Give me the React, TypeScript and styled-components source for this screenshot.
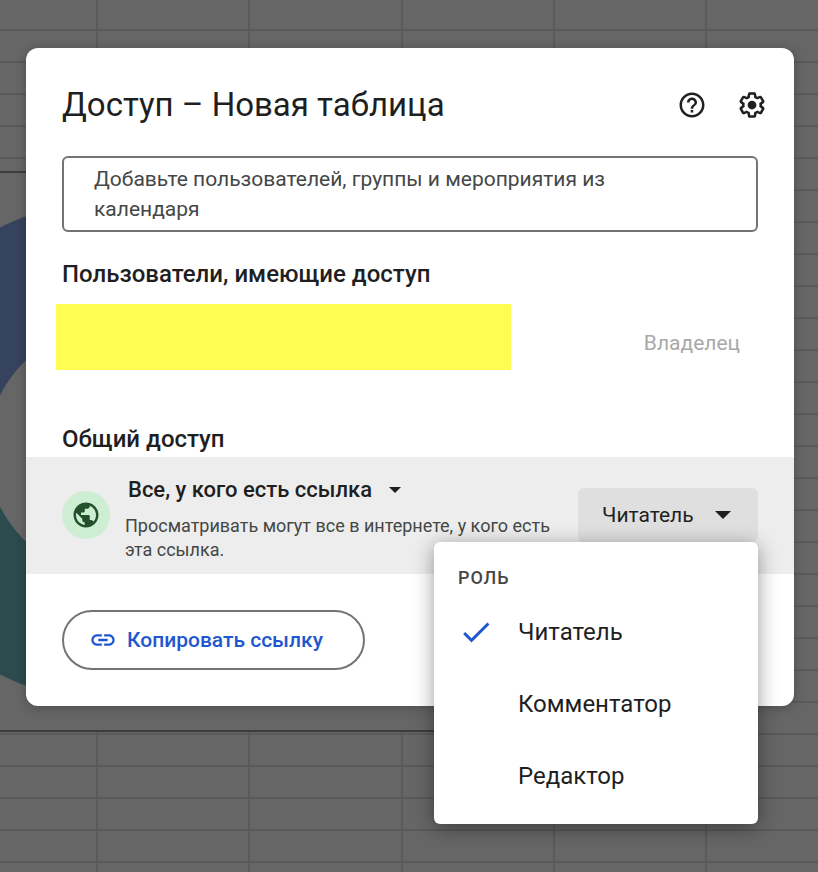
import React, { useState } from "react";
import styled, { createGlobalStyle } from "styled-components";

const GlobalStyle = createGlobalStyle`
  *, *::before, *::after { box-sizing: border-box; }
  body { margin: 0; background: #666; }
  body, button, select, textarea { font-family: Roboto, "Noto Sans", sans-serif; }
`;

const Page = styled.div`
  position: relative;
  min-height: 100vh;
  padding: 48px 24px 48px 26px;
  overflow: hidden;
`;

const SheetBackdrop = styled.svg`
  position: absolute;
  inset: 0;
  width: 100%;
  height: 100%;
`;

const Dialog = styled.section`
  position: relative;
  display: flex;
  flex-direction: column;
  padding-bottom: 36px;
  border-radius: 12px;
  background: #fff;
  color: #1f1f1f;
  box-shadow: 0 2px 12px rgba(0, 0, 0, 0.25);
`;

const Header = styled.header`
  display: flex;
  align-items: center;
  justify-content: space-between;
  padding: 34px 24px 28px 36px;
`;

const Title = styled.h1`
  margin: 0;
  font-size: 33px;
  line-height: 46px;
  font-weight: 400;
`;

const Actions = styled.div`
  display: flex;
  gap: 24px;
`;

const IconButton = styled.button`
  display: grid;
  place-items: center;
  width: 36px;
  height: 36px;
  padding: 0;
  border: 0;
  border-radius: 50%;
  background: none;
  color: #1f1f1f;
  cursor: pointer;
`;

const PeopleField = styled.textarea`
  display: block;
  margin: 0 36px;
  height: 76px;
  padding: 6px 96px 6px 30px;
  border: 2px solid #747474;
  border-radius: 6px;
  background: #fff;
  color: #1f1f1f;
  font-size: 21px;
  line-height: 30px;
  resize: none;
  overflow: hidden;
  &::placeholder { color: #444746; opacity: 1; }
`;

const SectionTitle = styled.h2`
  margin: 0;
  padding: 0 36px;
  font-size: 24px;
  line-height: 32px;
  font-weight: 500;
`;

const PeopleSection = styled.section`
  padding-top: 26px;
`;

const PersonRow = styled.div`
  display: flex;
  align-items: center;
  justify-content: space-between;
  padding: 14px 54px 53px 30px;
`;

const PersonIdentity = styled.div`
  flex: 0 1 455px;
  height: 66px;
  background: #fffc52;
`;

const OwnerLabel = styled.span`
  padding-top: 12px;
  color: #a9a9a9;
  font-size: 21px;
  line-height: 30px;
`;

const AccessRow = styled.div`
  display: flex;
  align-items: flex-start;
  gap: 15px;
  margin-top: 2px;
  padding: 16px 36px 12px;
  background: #ededed;
`;

const GlobeBadge = styled.span`
  display: grid;
  place-items: center;
  flex: none;
  width: 48px;
  height: 48px;
  margin-top: 18px;
  border-radius: 50%;
  background: #ceeed3;
  color: #24512b;
`;

const AccessText = styled.div`
  flex: 1;
  min-width: 0;
`;

const ScopePicker = styled.label`
  display: flex;
  align-items: center;
  gap: 16px;
  height: 33px;
  padding-left: 3px;
`;

const ScopeSelect = styled.select`
  appearance: none;
  padding: 0;
  border: 0;
  background: none;
  color: #1f1f1f;
  font-size: 22px;
  line-height: 32px;
  font-weight: 500;
`;

const AccessHint = styled.p`
  margin: 8px 0 0;
  color: #444746;
  font-size: 18px;
  line-height: 24px;
`;

const RoleAnchor = styled.div`
  position: relative;
  flex: none;
  margin-top: 15px;
`;

const RoleButton = styled.button`
  display: flex;
  align-items: center;
  justify-content: space-between;
  width: 180px;
  height: 54px;
  padding: 0 27px 0 24px;
  border: 0;
  border-radius: 6px;
  background: #dfdfdf;
  color: #1f1f1f;
  font-size: 21px;
  cursor: pointer;
`;

const RoleMenu = styled.div`
  position: absolute;
  top: 100%;
  right: 0;
  width: 324px;
  padding: 24px 0 12px;
  border-radius: 6px;
  background: #fff;
  box-shadow: 0 4px 20px rgba(0, 0, 0, 0.4);
`;

const MenuHeading = styled.div`
  padding: 0 24px 6px;
  color: #444746;
  font-size: 18px;
  line-height: 24px;
  font-weight: 500;
  letter-spacing: 1px;
`;

const MenuItem = styled.button`
  display: grid;
  grid-template-columns: 36px 1fr;
  column-gap: 24px;
  align-items: center;
  width: 100%;
  height: 72px;
  padding: 0 24px;
  border: 0;
  background: none;
  color: #1f1f1f;
  font-size: 24px;
  text-align: left;
  cursor: pointer;
`;

const CheckSlot = styled.span`
  display: grid;
  place-items: center;
  color: #1f57d0;
`;

const Footer = styled.footer`
  display: flex;
  padding: 36px 36px 0;
`;

const CopyButton = styled.button`
  display: flex;
  align-items: center;
  gap: 10px;
  height: 60px;
  padding: 0 40px 0 25px;
  border: 2px solid #747474;
  border-radius: 30px;
  background: #fff;
  color: #1f57d0;
  font-size: 21px;
  font-weight: 500;
  cursor: pointer;
`;

function Icon({ size, d }: { size: number; d: string }) {
  return (
    <svg width={size} height={size} viewBox="0 0 24 24" fill="currentColor" aria-hidden="true">
      <path d={d} />
    </svg>
  );
}

const helpPath =
  "M11 18h2v-2h-2v2zm1-16C6.480 2 2 6.480 2 12s4.480 10 10 10 10-4.480 10-10S17.520 2 12 2zm0 18c-4.410 0-8-3.590-8-8s3.590-8 8-8 8 3.590 8 8-3.590 8-8 8zm0-14c-2.210 0-4 1.790-4 4h2c0-1.100.9-2 2-2s2 .9 2 2c0 2-3 1.750-3 5h2c0-2.250 3-2.500 3-5 0-2.210-1.790-4-4-4z";
const gearPath =
  "M13.850 22.250h-3.700c-.74 0-1.360-.54-1.450-1.270l-.27-1.890c-.27-.14-.53-.29-.79-.46l-1.800.72c-.7.26-1.470-.03-1.810-.65L2.200 15.530c-.35-.66-.2-1.440.36-1.880l1.530-1.190c-.01-.15-.02-.3-.02-.46 0-.15.01-.31.02-.46l-1.520-1.190c-.59-.45-.74-1.260-.37-1.880l1.850-3.190c.34-.62 1.110-.9 1.790-.63l1.810.73c.26-.17.52-.32.78-.46l.27-1.910c.09-.7.710-1.250 1.440-1.250h3.700c.74 0 1.360.54 1.450 1.270l.27 1.890c.27.14.53.29.79.46l1.800-.72c.71-.26 1.480.03 1.820.65l1.840 3.180c.36.66.2 1.440-.36 1.880l-1.520 1.190c.01.15.02.3.02.46s-.01.31-.02.46l1.520 1.190c.56.45.72 1.230.37 1.860l-1.860 3.220c-.34.62-1.110.9-1.800.63l-1.800-.72c-.26.17-.52.32-.78.46l-.27 1.910c-.1.68-.72 1.220-1.460 1.220zm-3.230-2h2.760l.37-2.550.53-.22c.44-.18.88-.44 1.340-.78l.45-.34 2.380.96 1.380-2.400-2.030-1.580.07-.56c.03-.26.06-.51.06-.78s-.03-.53-.06-.78l-.07-.56 2.030-1.580-1.390-2.400-2.390.96-.45-.35c-.42-.32-.87-.58-1.330-.77l-.52-.22-.37-2.550h-2.760l-.37 2.550-.53.21c-.44.19-.88.44-1.340.79l-.45.33-2.380-.95-1.390 2.390 2.030 1.580-.07.56a7 7 0 0 0-.06.79c0 .26.02.53.06.78l.07.56-2.030 1.580 1.380 2.400 2.390-.96.45.35c.43.33.86.58 1.330.77l.53.22.38 2.550zM12 8.500a3.500 3.500 0 1 0 0 7 3.500 3.500 0 0 0 0-7z";
const globePath =
  "M12 2C6.480 2 2 6.480 2 12s4.480 10 10 10 10-4.480 10-10S17.520 2 12 2zm-1 17.930c-3.950-.49-7-3.850-7-7.930 0-.62.08-1.210.21-1.790L9 15v1c0 1.100.9 2 2 2v1.930zm6.900-2.540c-.26-.81-1-1.390-1.900-1.390h-1v-3c0-.55-.45-1-1-1H8v-2h2c.55 0 1-.45 1-1V7h2c1.100 0 2-.9 2-2v-.41c2.930 1.190 5 4.060 5 7.410 0 2.080-.8 3.970-2.100 5.390z";
const linkPath =
  "M3.900 12c0-1.710 1.390-3.100 3.100-3.100h4V7H7c-2.760 0-5 2.240-5 5s2.240 5 5 5h4v-1.900H7c-1.710 0-3.100-1.390-3.100-3.100zM8 13h8v-2H8v2zm9-6h-4v1.900h4c1.710 0 3.100 1.390 3.100 3.100s-1.390 3.100-3.100 3.100h-4V17h4c2.760 0 5-2.240 5-5s-2.240-5-5-5z";
const checkPath = "M9 16.170L4.830 12l-1.420 1.410L9 19 21 7l-1.410-1.410z";

function Caret({ width }: { width: number }) {
  return (
    <svg width={width} height={width / 2} viewBox="0 0 12 6" fill="#1f1f1f" aria-hidden="true">
      <path d="M0 0h12L6 6z" />
    </svg>
  );
}

const columnLines = [97, 249, 402, 554, 706];

function Sheet() {
  return (
    <SheetBackdrop aria-hidden="true">
      <defs>
        <pattern id="rows" y="29" width="32" height="32" patternUnits="userSpaceOnUse">
          <rect width="32" height="2" fill="#5a5a5a" />
        </pattern>
      </defs>
      <rect width="100%" height="100%" fill="#666" />
      <rect width="100%" height="100%" fill="url(#rows)" />
      {columnLines.map((x) => (
        <rect key={x} x={x - 1} width="2" height="100%" fill="#5a5a5a" />
      ))}
      <rect x="-300" y="171" width="1000" height="561" fill="#666" />
      <rect x="-300" y="171" width="1000" height="2" fill="#3c3c3c" />
      <rect x="-300" y="730" width="1000" height="2" fill="#3c3c3c" />
      <path d="M-138 451A250 250 0 0 1 112 201V326A125 125 0 0 0 -13 451z" fill="#36435f" />
      <path d="M-138 451A250 250 0 0 0 112 701V576A125 125 0 0 1 -13 451z" fill="#2c4b4e" />
    </SheetBackdrop>
  );
}

const roles = ["Читатель", "Комментатор", "Редактор"];

export default function App() {
  const [role, setRole] = useState(roles[0]);
  const [menuOpen, setMenuOpen] = useState(true);

  const pickRole = (next: string) => {
    setRole(next);
    setMenuOpen(false);
  };

  return (
    <>
      <GlobalStyle />
      <Page>
        <Sheet />
        <Dialog role="dialog" aria-labelledby="share-title">
          <Header>
            <Title id="share-title">Доступ – Новая таблица</Title>
            <Actions>
              <IconButton aria-label="Справка">
                <Icon size={30} d={helpPath} />
              </IconButton>
              <IconButton aria-label="Настройки">
                <Icon size={30} d={gearPath} />
              </IconButton>
            </Actions>
          </Header>
          <PeopleField
            aria-label="Добавить пользователей"
            placeholder="Добавьте пользователей, группы и мероприятия из календаря"
          />
          <PeopleSection>
            <SectionTitle>Пользователи, имеющие доступ</SectionTitle>
            <PersonRow>
              <PersonIdentity />
              <OwnerLabel>Владелец</OwnerLabel>
            </PersonRow>
          </PeopleSection>
          <SectionTitle>Общий доступ</SectionTitle>
          <AccessRow>
            <GlobeBadge>
              <Icon size={30} d={globePath} />
            </GlobeBadge>
            <AccessText>
              <ScopePicker>
                <ScopeSelect aria-label="Общий доступ" defaultValue="link">
                  <option value="link">Все, у кого есть ссылка</option>
                </ScopeSelect>
                <Caret width={12} />
              </ScopePicker>
              <AccessHint>Просматривать могут все в интернете, у кого есть эта ссылка.</AccessHint>
            </AccessText>
            <RoleAnchor>
              <RoleButton aria-haspopup="menu" aria-expanded={menuOpen} onClick={() => setMenuOpen(!menuOpen)}>
                {role}
                <Caret width={16} />
              </RoleButton>
              {menuOpen && (
                <RoleMenu role="menu" aria-labelledby="role-heading">
                  <MenuHeading id="role-heading">РОЛЬ</MenuHeading>
                  {roles.map((name) => (
                    <MenuItem key={name} role="menuitemradio" aria-checked={name === role} onClick={() => pickRole(name)}>
                      <CheckSlot>{name === role && <Icon size={36} d={checkPath} />}</CheckSlot>
                      {name}
                    </MenuItem>
                  ))}
                </RoleMenu>
              )}
            </RoleAnchor>
          </AccessRow>
          <Footer>
            <CopyButton>
              <Icon size={28} d={linkPath} />
              Копировать ссылку
            </CopyButton>
          </Footer>
        </Dialog>
      </Page>
    </>
  );
}
